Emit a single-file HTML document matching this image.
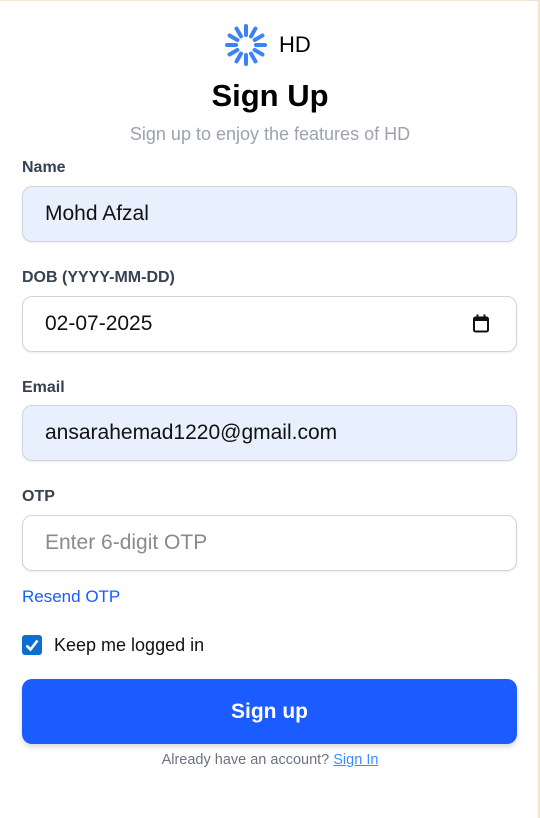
<!DOCTYPE html>
<html><head><style>
html,body{margin:0;padding:0;background:#fff;}
body{width:540px;height:818px;position:relative;overflow:hidden;font-family:"Liberation Sans",sans-serif;}
.tb{position:absolute;left:0;top:0;width:540px;height:1px;background:#f3e3d0;}
.rb{position:absolute;right:0;top:0;width:2px;height:818px;background:#f3e3d0;}
.abs{position:absolute;}
.lbl{position:absolute;left:22px;font-size:16px;font-weight:bold;color:#374151;}
.inp{position:absolute;left:22px;width:495px;height:56px;box-sizing:border-box;border:1px solid #d1d5db;border-radius:10px;box-shadow:0 1px 2px rgba(0,0,0,.08);font-size:21px;color:#111;padding-left:22px;line-height:54px;background:#fff;}
.fill{background:#e8f0fe;}
</style></head><body>
<div class="tb"></div>
<div class="rb"></div>
<svg class="abs" style="left:224px;top:23px" width="44" height="44" viewBox="-22 -22 44 44">
<g stroke="#3b82f6" stroke-width="4" stroke-linecap="round">
<line x1="0" y1="-10" x2="0" y2="-19"/>
<line x1="0" y1="-10" x2="0" y2="-19" transform="rotate(30)"/>
<line x1="0" y1="-10" x2="0" y2="-19" transform="rotate(60)"/>
<line x1="0" y1="-10" x2="0" y2="-19" transform="rotate(90)"/>
<line x1="0" y1="-10" x2="0" y2="-19" transform="rotate(120)"/>
<line x1="0" y1="-10" x2="0" y2="-19" transform="rotate(150)"/>
<line x1="0" y1="-10" x2="0" y2="-19" transform="rotate(180)"/>
<line x1="0" y1="-10" x2="0" y2="-19" transform="rotate(210)"/>
<line x1="0" y1="-10" x2="0" y2="-19" transform="rotate(240)"/>
<line x1="0" y1="-10" x2="0" y2="-19" transform="rotate(270)"/>
<line x1="0" y1="-10" x2="0" y2="-19" transform="rotate(300)"/>
<line x1="0" y1="-10" x2="0" y2="-19" transform="rotate(330)"/>
</g></svg>
<div class="abs" style="left:279px;top:32px;font-size:22px;color:#000;">HD</div>
<div class="abs" style="left:0;width:540px;top:78px;text-align:center;font-size:31px;font-weight:bold;color:#000;">Sign Up</div>
<div class="abs" style="left:0;width:540px;top:124px;text-align:center;font-size:18px;color:#9ca3af;">Sign up to enjoy the features of HD</div>

<div class="lbl" style="top:159px">Name</div>
<div class="inp fill" style="top:186px">Mohd Afzal</div>

<div class="lbl" style="top:269px">DOB (YYYY-MM-DD)</div>
<div class="inp" style="top:296px">02-07-2025
<svg class="abs" style="left:449px;top:17px" width="18" height="20" viewBox="0 0 18 20"><rect x="2" y="3.5" width="14" height="14" rx="1.5" fill="none" stroke="#111" stroke-width="2"/><rect x="2" y="3" width="14" height="4" fill="#111"/><rect x="4.5" y="0.5" width="2" height="4" fill="#111"/><rect x="11.5" y="0.5" width="2" height="4" fill="#111"/></svg></div>

<div class="lbl" style="top:379px">Email</div>
<div class="inp fill" style="top:405px">ansarahemad1220@gmail.com</div>

<div class="lbl" style="top:488px">OTP</div>
<div class="inp" style="top:515px;color:#8a8a8a">Enter 6-digit OTP</div>

<div class="abs" style="left:22px;top:587px;font-size:17px;color:#1a5cff;">Resend OTP</div>

<div class="abs" style="left:22px;top:635px;width:20px;height:20px;border-radius:3px;background:#0b6fd1;">
<svg width="20" height="20" viewBox="0 0 20 20"><path d="M4.5 10.5 L8.5 14.5 L15.5 5.5" fill="none" stroke="#fff" stroke-width="2.6"/></svg></div>
<div class="abs" style="left:54px;top:635px;font-size:18px;color:#111;">Keep me logged in</div>

<div class="abs" style="left:22px;top:679px;width:495px;height:65px;border-radius:10px;background:#1a5cff;box-shadow:0 3px 6px rgba(0,0,0,.15);color:#fff;font-size:21px;font-weight:bold;text-align:center;line-height:65px;">Sign up</div>

<div class="abs" style="left:0;width:540px;top:752px;text-align:center;font-size:14.5px;color:#6b7280;">Already have an account? <span style="color:#3b8bff;text-decoration:underline;">Sign In</span></div>
</body></html>
